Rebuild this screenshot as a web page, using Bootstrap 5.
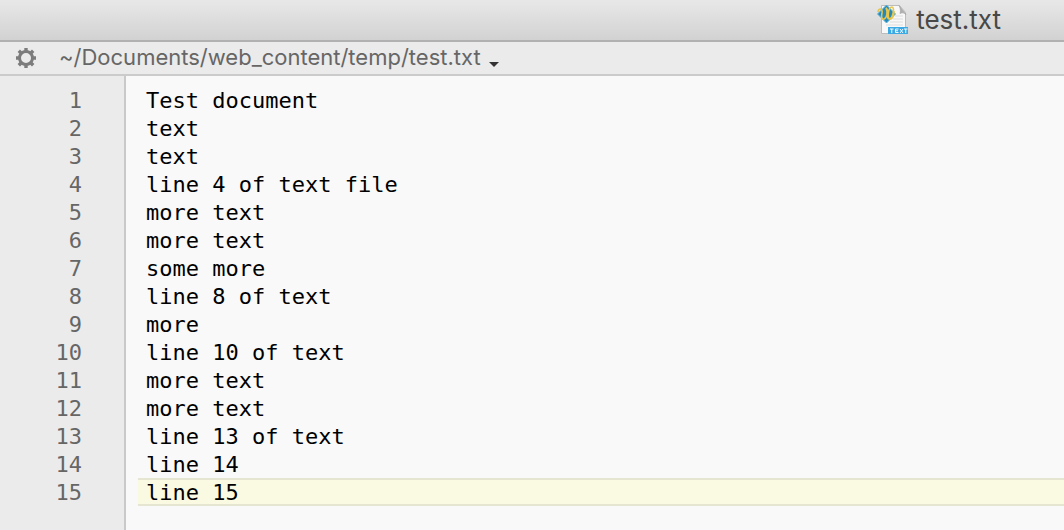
<!DOCTYPE html>
<html lang="en">
<head>
<meta charset="utf-8">
<meta name="viewport" content="width=device-width, initial-scale=1">
<title>test.txt</title>
<link href="https://cdn.jsdelivr.net/npm/bootstrap@5.3.0/dist/css/bootstrap.min.css" rel="stylesheet">
<style>
  body { font-family: Inter, "Liberation Sans", sans-serif; background: #f9f9f9; }
  .title-bar { height: 42px; padding-right: 63px; gap: 7px; background: linear-gradient(#e8e8e8, #d2d2d2); border-bottom: 2px solid #b1b1b1; }
  .doc-title { font-size: 26px; line-height: 40px; color: #484848; }
  .path-bar { height: 34px; background: #ebebeb; border-bottom: 2px solid #cbcbcb; padding-left: 15px; gap: 22px; color: #666; }
  .path-bar button { line-height: 30px; color: #666; }
  .path-menu { font-size: 22px; gap: 8px; padding-bottom: 2px !important; }
  .path-menu svg { margin-top: 14px; }
  .editor { font-family: "DejaVu Sans Mono", monospace; font-size: 22px; line-height: 30px; }
  .editor li { height: 28px; }
  .gutter { width: 126px; padding: 10px 42px 0 0; background: #ebebeb; border-right: 2px solid #c9c9c9; color: #666; }
  .code-lines { padding-top: 10px; padding-left: 12px; color: #000; }
  .code-lines li { padding-left: 8px; white-space: pre; }
  .code-lines .current-line { background: #fafae3; box-shadow: inset 0 2px #e6e5d1, inset 0 -2px #e6e5d1; }
</style>
</head>
<body class="d-flex flex-column min-vh-100">
  <header class="title-bar d-flex align-items-center justify-content-end">
    <svg width="32" height="32" viewBox="0 0 32 32" aria-hidden="true">
      <path d="M4.500 1.500h18l6 7v21h-24z" fill="#f8f8f8" stroke="#bcbcbc"/>
      <path d="M22 1.500l7 9c-2-2-4-2-6-1 1-3 0-6-1-8z" fill="#b0b0b0" stroke="#a0a0a0" stroke-width=".6"/>
      <path d="M18 12h8M16 15h10M13 18h13M9 21h17" stroke="#dcdcdc"/>
      <path d="M11 23h20v7H11z" fill="#3ba9e4"/>
      <path d="M13 25h3.500M14.750 25v4M21.500 25h-3v3.500h3M18.500 26.750h2.500M23 25l3 4m0-4l-3 4M27 25h3.500M28.750 25v4" fill="none" stroke="#eefaff"/>
      <path d="M9.500 1l9 9-9 9-9-9z" fill="#2489bd" stroke="#65b4d5"/>
      <path d="M1 8c0-4 5-4 4 1-1 4 0 7 2 6 3-1 4-7 2-11 4 3 0 11 3 11 4 0 6-12 3-12-4 0-5 12-2 12 3 0 4-5 4-8" fill="none" stroke="#e5c64e" stroke-width="1.600"/>
    </svg>
    <h1 class="doc-title m-0 fw-normal">test.txt</h1>
  </header>
  <nav class="path-bar d-flex align-items-center" aria-label="Document path">
    <button type="button" class="border-0 bg-transparent p-0 d-flex" aria-label="Document options">
      <svg width="22" height="22" viewBox="0 0 22 22" fill="none" stroke="#7c7c7c">
        <circle cx="11" cy="11" r="6.500" stroke-width="3"/>
        <path d="M11 1v4M11 17v4M1 11h4M17 11h4M3.800 3.800l3 3M15.200 15.200l3 3M18.200 3.800l-3 3M6.800 15.200l-3 3" stroke-width="3.400"/>
      </svg>
    </button>
    <button type="button" class="path-menu border-0 bg-transparent p-0 d-flex align-items-center" aria-haspopup="true">
      <span>~/Documents/web_content/temp/test.txt</span>
      <svg width="10" height="5" viewBox="0 0 10 5" aria-hidden="true"><path d="M0 0h10L5 5z" fill="#333"/></svg>
    </button>
  </nav>
  <main class="editor d-flex flex-grow-1">
    <ol class="gutter list-unstyled m-0 text-end flex-shrink-0" aria-hidden="true">
      <li>1</li><li>2</li><li>3</li><li>4</li><li>5</li><li>6</li><li>7</li><li>8</li><li>9</li><li>10</li><li>11</li><li>12</li><li>13</li><li>14</li><li>15</li>
    </ol>
    <ol class="code-lines list-unstyled m-0 flex-grow-1">
      <li>Test document</li>
      <li>text</li>
      <li>text</li>
      <li>line 4 of text file</li>
      <li>more text</li>
      <li>more text</li>
      <li>some more</li>
      <li>line 8 of text</li>
      <li>more</li>
      <li>line 10 of text</li>
      <li>more text</li>
      <li>more text</li>
      <li>line 13 of text</li>
      <li>line 14</li>
      <li class="current-line">line 15</li>
    </ol>
  </main>
<script src="https://cdn.jsdelivr.net/npm/bootstrap@5.3.0/dist/js/bootstrap.bundle.min.js"></script>
</body>
</html>
